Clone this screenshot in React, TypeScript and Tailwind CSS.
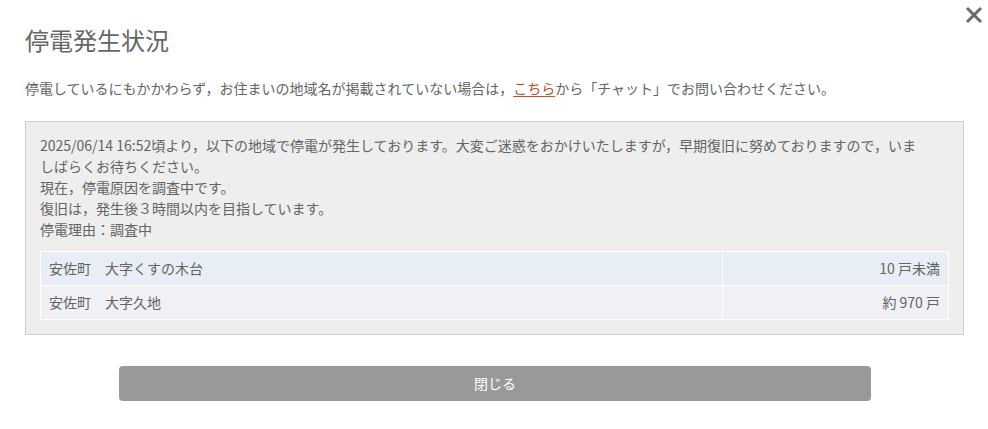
import React from "react";

export default function App() {
  const font = { fontFamily: '"Noto Sans CJK JP", "Noto Sans", sans-serif' };
  return (
    <div className="relative w-[988px] h-[429px] bg-white text-[#646464]" style={font}>
      <button className="absolute right-[5px] top-[6px] w-[18px] h-[18px] flex items-center justify-center">
        <svg width="18" height="18" viewBox="0 0 18 18">
          <path d="M2 2 L16 16 M16 2 L2 16" stroke="#6a6a6a" strokeWidth="3" strokeLinecap="butt" />
        </svg>
      </button>
      <div className="pl-[25px] pr-[24px] pt-[24px]">
        <h1 className="text-[24px] leading-[32px] text-[#666666] font-normal">停電発生状況</h1>
        <p className="mt-[22px] text-[14px] leading-[21px]">
          停電しているにもかかわらず，お住まいの地域名が掲載されていない場合は，
          <a className="text-[#c0502a] underline underline-offset-2">こちら</a>
          から「チャット」でお問い合わせください。
        </p>
        <div className="mt-[22px] border border-[#cfcfcf] bg-[#eeeeee] px-[14px] pt-[13px] pb-[14px] text-[14px] leading-[21px]">
          <p>
            2025/06/14 16:52頃より，以下の地域で停電が発生しております。大変ご迷惑をおかけいたしますが，早期復旧に努めておりますので，いま
            <br />
            しばらくお待ちください。
            <br />
            現在，停電原因を調査中です。
            <br />
            復旧は，発生後３時間以内を目指しています。
            <br />
            停電理由：調査中
          </p>
          <table className="mt-[11px] w-full border-collapse">
            <tbody>
              <tr className="bg-[#e8eef6]">
                <td className="border border-white h-[34px] px-[8px] w-[682px]">安佐町　大字くすの木台</td>
                <td className="border border-white h-[34px] px-[8px] text-right">10 戸未満</td>
              </tr>
              <tr className="bg-[#f0f0f5]">
                <td className="border border-white h-[34px] px-[8px]">安佐町　大字久地</td>
                <td className="border border-white h-[34px] px-[8px] text-right">約 970 戸</td>
              </tr>
            </tbody>
          </table>
        </div>
        <div className="mt-[31px] flex">
          <button className="ml-[94px] w-[752px] h-[35px] rounded-[4px] bg-[#999999] text-white text-[14px]">閉じる</button>
        </div>
      </div>
    </div>
  );
}
